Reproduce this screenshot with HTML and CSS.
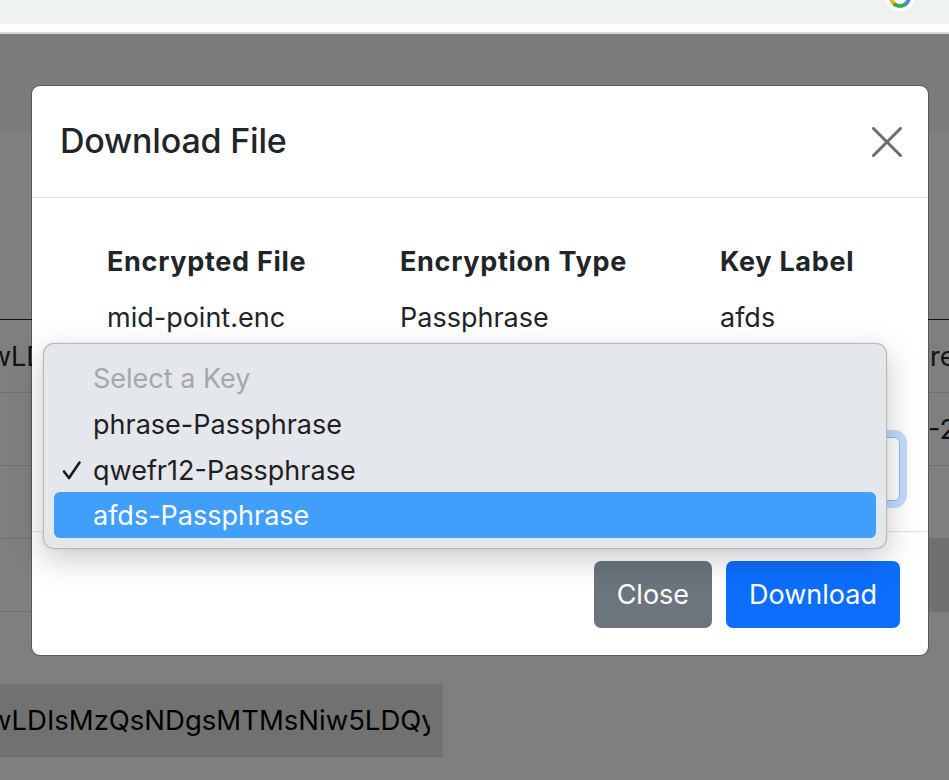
FILE: index.html
```html
<!DOCTYPE html>
<html lang="en">
<head>
<meta charset="utf-8">
<title>Download File</title>
<link rel="stylesheet" href="styles.css">
</head>
<body>
<div class="chrome">
  <svg class="profile" width="32" height="14" viewBox="0 0 32 14" aria-hidden="true">
    <circle cx="16" cy="-3" r="15" fill="#ffffff"/>
    <circle cx="16" cy="-3" r="9" fill="none" stroke="#34a853" stroke-width="3.6"/>
    <path d="M7 -3 A9 9 0 0 0 10 3.7" fill="none" stroke="#fbbc04" stroke-width="3.6"/>
    <path d="M21.5 4.1 A9 9 0 0 0 25 -3" fill="none" stroke="#4285f4" stroke-width="3.6"/>
  </svg>
</div>
<div class="tabline"></div>
<div class="page">
  <div class="navbar"></div>
  <div class="tbl">
    <div class="thead"></div>
    <div class="trow"><span class="cell-l">wLDIsMzQsNDgsMTMsNiw5LDQy</span><span class="cell-r">re</span></div>
    <div class="trow"><span class="cell-l"></span><span class="cell-r shift">-2</span></div>
    <div class="trow"><span class="cell-l"></span><span class="cell-r"></span></div>
    <div class="trow"><span class="cell-l"></span><span class="cell-r filled"></span></div>
  </div>
  <div class="code"><span class="code-text">wLDIsMzQsNDgsMTMsNiw5LDQyNCwxMjE</span></div>

  <div class="backdrop">
    <div class="modal">
      <div class="modal-header">
        <h5 class="modal-title">Download File</h5>
        <svg class="btn-close" width="30" height="30" viewBox="0 0 30 30" aria-label="Close">
          <path d="M1.5 1.5 L28.5 28.5 M28.5 1.5 L1.5 28.5" stroke="#6d6d6d" stroke-width="3" stroke-linecap="round"/>
        </svg>
      </div>
      <div class="modal-body">
        <div class="info">
          <div class="th">Encrypted File</div>
          <div class="th">Encryption Type</div>
          <div class="th">Key Label</div>
          <div class="td">mid-point.enc</div>
          <div class="td">Passphrase</div>
          <div class="td">afds</div>
        </div>
        <div class="select-wrap">
          <div class="select">qwefr12-Passphrase</div>
          <div class="popup">
            <div class="opt placeholder"><span class="mark"></span>Select a Key</div>
            <div class="opt"><span class="mark"></span>phrase-Passphrase</div>
            <div class="opt"><span class="mark"><svg width="19" height="19" viewBox="0 0 19 19"><path d="M2 10.5 L7 17 L17.5 1.5" fill="none" stroke="#1c1c1c" stroke-width="2.6" stroke-linecap="round" stroke-linejoin="round"/></svg></span>qwefr12-Passphrase</div>
            <div class="opt active"><span class="mark"></span>afds-Passphrase</div>
          </div>
        </div>
      </div>
      <div class="modal-footer">
        <button class="btn btn-secondary">Close</button>
        <button class="btn btn-primary">Download</button>
      </div>
    </div>
  </div>
</div>
</body>
</html>
```
FILE: styles.css
```css
* { box-sizing: border-box; }
html, body { margin: 0; padding: 0; }
body {
  width: 949px;
  height: 780px;
  overflow: hidden;
  font-family: Inter, "Noto Sans", "Liberation Sans", sans-serif;
  color: #212529;
  background: #ffffff;
}

.chrome {
  height: 24px;
  background: #eef2f3;
  display: flex;
  justify-content: flex-end;
  padding-right: 33px;
  overflow: hidden;
}
.profile { display: block; }

.tabline {
  height: 10px;
  background: #ffffff;
  border-bottom: 2px solid #d9d9d9;
}

.page {
  position: relative;
  height: 746px;
  overflow: hidden;
  background: #ffffff;
  font-size: 27px;
}

.navbar {
  height: 99px;
  background: #f8f9fa;
}

.thead {
  height: 187px;
  border-bottom: 1px solid #212529;
}
.trow {
  display: grid;
  grid-template-columns: 929px 1fr;
  height: 73px;
  border-bottom: 1px solid #dee2e6;
  align-items: center;
}
.cell-l {
  white-space: nowrap;
  overflow: hidden;
  text-indent: -11px;
}
.cell-r {
  white-space: nowrap;
  height: 100%;
  display: flex;
  align-items: center;
  padding-left: 1px;
}
.cell-r.shift { margin-left: -2px; }
.cell-r.filled { background: #e0e0e0; }

.code {
  margin-top: 72px;
  width: 443px;
  height: 73px;
  background: #e3e3e3;
  border-bottom: 1px solid #d8d8d8;
  padding-right: 13px;
  display: flex;
  align-items: center;
}
.code-text {
  display: block;
  white-space: nowrap;
  overflow: hidden;
  text-indent: -11px;
  font-size: 27.5px;
  color: #000;
}

.backdrop {
  position: absolute;
  inset: 0;
  background: rgba(0, 0, 0, 0.5);
  padding: 51px 0 0 31px;
}

.modal {
  width: 898px;
  background: #ffffff;
  border: 1px solid rgba(0, 0, 0, 0.3);
  border-radius: 9px;
  background-clip: padding-box;
}

.modal-header {
  height: 112px;
  border-bottom: 1px solid #dee2e6;
  display: flex;
  align-items: center;
  justify-content: space-between;
  padding: 0 26px 0 28px;
}
.modal-title {
  margin: 0;
  font-size: 34px;
  font-weight: 500;
  line-height: 1.2;
  letter-spacing: -0.2px;
}
.btn-close { display: block; margin-top: 1px; }

.modal-body {
  padding: 40px 28px 30px 29px;
}
.info {
  display: grid;
  grid-template-columns: 293px 320px 1fr;
  grid-auto-rows: 47px;
  row-gap: 9px;
  align-items: center;
  padding-left: 46px;
  font-size: 27px;
}
.th {
  font-weight: 700;
  letter-spacing: 0.7px;
}
.td { font-weight: 400; }

.select-wrap {
  position: relative;
  margin-top: 96px;
}
.select {
  height: 64px;
  border: 1px solid #86b7fe;
  border-radius: 6px;
  box-shadow: 0 0 0 7px rgba(13, 110, 253, 0.25);
  padding: 0 20px;
  display: flex;
  align-items: center;
  font-size: 27px;
}

.popup {
  position: absolute;
  top: -94px;
  left: -18px;
  width: 844px;
  background: #e4e7ec;
  border: 1px solid rgba(0, 0, 0, 0.2);
  border-radius: 11px;
  padding: 10px 10px;
  box-shadow: 0 10px 32px rgba(0, 0, 0, 0.22), 0 0 3px rgba(0, 0, 0, 0.08);
  font-size: 27px;
  color: #1f1f1f;
}
.opt {
  height: 46px;
  display: flex;
  align-items: center;
  padding-left: 8px;
  padding-top: 2px;
  border-radius: 6px;
  white-space: nowrap;
}
.opt .mark {
  width: 31px;
  flex: none;
  display: flex;
  align-items: center;
}
.opt .mark svg { display: block; }
.opt.placeholder { color: #a5a7ab; }
.opt.active {
  background: #3f9ffb;
  color: #ffffff;
  padding-top: 0;
}

.modal-footer {
  border-top: 1px solid #dee2e6;
  padding: 29px 28px 27px;
  display: flex;
  justify-content: flex-end;
  gap: 14px;
}
.btn {
  height: 67px;
  border: none;
  border-radius: 7px;
  padding: 0 23px;
  font-family: inherit;
  font-size: 27px;
  color: #ffffff;
}
.btn-secondary { background: #6c757d; }
.btn-primary { background: #0d6efd; }
```
